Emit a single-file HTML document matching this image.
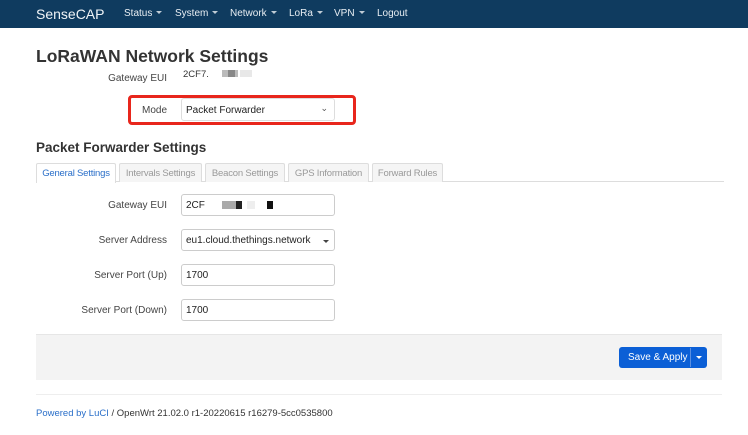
<!DOCTYPE html>
<html><head><style>
*{box-sizing:border-box;margin:0;padding:0}
body{width:748px;height:435px;background:#fff;font-family:"Liberation Sans",sans-serif;color:#333;position:relative;overflow:hidden;font-size:10px}
.a{position:absolute;white-space:nowrap}
.nav{left:0;top:0;width:748px;height:28px;background:#0f3b5f}
.nav span{position:absolute;top:8px;color:#e8eef3;font-size:10px}
.caret{display:inline-block;width:0;height:0;border-left:3px solid transparent;border-right:3px solid transparent;border-top:3px solid #c0ccd6;margin-left:4px;vertical-align:2px}
.lbl{text-align:right;width:140px;font-size:10px;color:#444}
.inp{left:181px;width:154px;height:22px;border:1px solid #ccc;border-radius:3px;padding:5px 4px;font-size:10px;color:#222;background:#fff}
.tab{top:163px;height:19px;border:1px solid #ddd;border-bottom:none;background:#f5f5f5;color:#999;font-size:9.5px;padding:4px 0;text-align:center;border-radius:2px 2px 0 0;letter-spacing:-0.2px}
</style></head><body>
<div class="a nav">
<span style="left:36px;top:6px;font-size:14px;color:#f0f4f7">SenseCAP</span>
<span style="left:124px">Status<i class="caret"></i></span>
<span style="left:175px">System<i class="caret"></i></span>
<span style="left:230px">Network<i class="caret"></i></span>
<span style="left:289px">LoRa<i class="caret"></i></span>
<span style="left:334px">VPN<i class="caret"></i></span>
<span style="left:377px">Logout</span>
</div>
<div class="a" style="left:36px;top:46px;font-size:17.5px;font-weight:bold;color:#333">LoRaWAN Network Settings</div>
<div class="a lbl" style="left:27px;top:73px">Gateway EUI</div>
<div class="a" style="left:183px;top:69px;font-size:9.5px">2CF7.</div>
<div class="a" style="left:222px;top:70px;width:16px;height:7px;background:#bbb"></div>
<div class="a" style="left:228px;top:70px;width:7px;height:7px;background:#888"></div>
<div class="a" style="left:240px;top:70px;width:12px;height:7px;background:#e8e8e8"></div>
<div class="a" style="left:128px;top:95px;width:228px;height:30px;border:3px solid #e8261c;border-radius:4px"></div>
<div class="a lbl" style="left:27px;top:105px">Mode</div>
<div class="a inp" style="top:98px;height:23px;border-color:#ddd;padding-top:6px">Packet Forwarder<span style="position:absolute;right:6px;top:4px;font-size:9px;color:#555">&#8964;</span></div>
<div class="a" style="left:36px;top:140px;font-size:13.5px;font-weight:bold">Packet Forwarder Settings</div>
<div class="a" style="left:36px;top:181px;width:688px;height:1px;background:#ddd"></div>
<div class="a tab" style="left:36px;width:80px;background:#fff;color:#2a6fc9;height:20px">General Settings</div>
<div class="a tab" style="left:119px;width:83px">Intervals Settings</div>
<div class="a tab" style="left:205px;width:80px">Beacon Settings</div>
<div class="a tab" style="left:288px;width:81px">GPS Information</div>
<div class="a tab" style="left:372px;width:71px">Forward Rules</div>
<div class="a lbl" style="left:27px;top:200px">Gateway EUI</div>
<div class="a inp" style="top:194px">2CF</div>
<div class="a" style="left:222px;top:201px;width:14px;height:8px;background:#aaa"></div>
<div class="a" style="left:236px;top:201px;width:6px;height:8px;background:#222"></div>
<div class="a" style="left:247px;top:201px;width:8px;height:8px;background:#eee"></div>
<div class="a" style="left:267px;top:201px;width:6px;height:8px;background:#111"></div>
<div class="a lbl" style="left:27px;top:235px">Server Address</div>
<div class="a inp" style="top:229px">eu1.cloud.thethings.network<i class="caret" style="position:absolute;right:5px;top:10px;border-top-color:#444"></i></div>
<div class="a lbl" style="left:27px;top:270px">Server Port (Up)</div>
<div class="a inp" style="top:264px">1700</div>
<div class="a lbl" style="left:27px;top:305px">Server Port (Down)</div>
<div class="a inp" style="top:299px">1700</div>
<div class="a" style="left:36px;top:334px;width:686px;height:46px;background:#f3f3f3;border-top:1px solid #e6e6e6"></div>
<div class="a" style="left:619px;top:347px;width:88px;height:21px;background:#0b5fd6;border-radius:3px"></div>
<div class="a" style="left:628px;top:352px;color:#fff;font-size:10px">Save &amp; Apply</div>
<div class="a" style="left:690px;top:348px;width:1px;height:19px;background:#5a8fe0"></div>
<i class="a caret" style="left:692px;top:356px;border-top-color:#fff"></i>
<div class="a" style="left:36px;top:394px;width:686px;height:1px;background:#eee"></div>
<div class="a" style="left:36px;top:408px;font-size:9.5px;color:#333"><span style="color:#2a6fc9">Powered by LuCI</span> / OpenWrt 21.02.0 r1-20220615 r16279-5cc0535800</div>
</body></html>
